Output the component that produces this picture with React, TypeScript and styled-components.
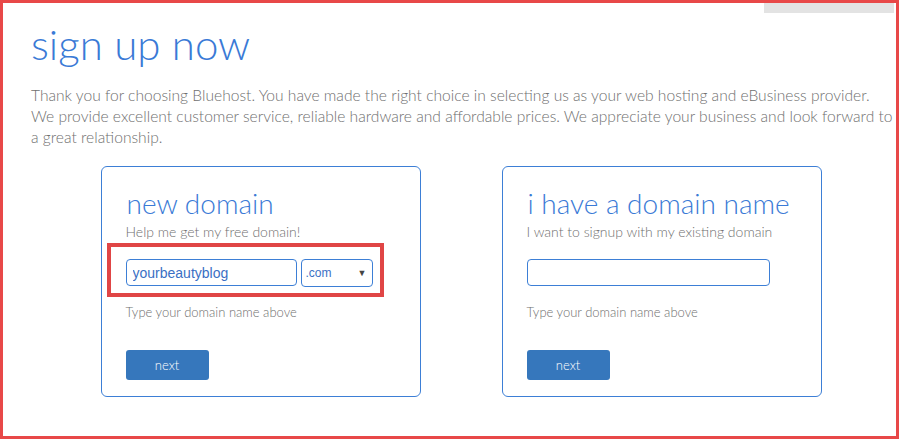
import React from 'react';
import styled, { createGlobalStyle } from 'styled-components';

const GlobalStyle = createGlobalStyle`
  html, body {
    margin: 0;
    padding: 0;
    background: #ffffff;
  }
  body {
    font-family: Lato, 'Open Sans', sans-serif;
  }
`;

const Frame = styled.div`
  box-sizing: border-box;
  width: 899px;
  height: 439px;
  border: 3px solid #e84848;
  overflow: hidden;
`;

const TopStrip = styled.div`
  display: flex;
  justify-content: flex-end;
  padding-right: 2px;
`;

const GrayTab = styled.div`
  width: 130px;
  height: 10px;
  background: #e3e3e3;
`;

const Content = styled.div`
  padding: 0 1px 0 28px;
`;

const PageTitle = styled.h1`
  margin: 7px 0 0;
  font-family: Lato, sans-serif;
  font-weight: 300;
  font-size: 42px;
  line-height: 48px;
  color: #3a7ad6;
`;

const Intro = styled.p`
  margin: 17px 0 0;
  font-family: Lato, sans-serif;
  font-weight: 300;
  font-size: 15.6px;
  line-height: 21px;
  color: #6f6f6f;
`;

const Cards = styled.div`
  display: flex;
  justify-content: center;
  gap: 81px;
  margin-top: 18px;
  padding-right: 4px;
`;

const Card = styled.div`
  box-sizing: border-box;
  width: 320px;
  height: 231px;
  border: 1px solid #3d7fd6;
  border-radius: 6px;
  padding: 19px 24px 0;
  display: flex;
  flex-direction: column;
`;

const CardTitle = styled.h2`
  margin: 0 0 0 1px;
  font-family: Lato, sans-serif;
  font-weight: 300;
  font-size: 28px;
  line-height: 34px;
  color: #3a7ad6;
  white-space: nowrap;
`;

const CardSub = styled.div`
  margin-top: 3px;
  font-family: Lato, sans-serif;
  font-weight: 300;
  font-size: 14px;
  line-height: 18px;
  color: #6f6f6f;
`;

const FieldRow = styled.div`
  position: relative;
  display: flex;
  gap: 4px;
  margin-top: 18px;
  height: 28px;
`;

const Marker = styled.div`
  position: absolute;
  top: -16px;
  left: -19px;
  width: 277px;
  height: 54px;
  box-sizing: border-box;
  border: 4px solid #e04545;
  pointer-events: none;
`;

const TextInput = styled.input<{ $width: number }>`
  box-sizing: border-box;
  width: ${p => p.$width}px;
  height: 27px;
  border: 1px solid #3d7fd6;
  border-radius: 4px;
  padding: 0 6px;
  font-family: 'Liberation Sans', Arial, sans-serif;
  font-size: 14px;
  color: #3a6fc4;
  outline: none;
`;

const SelectBox = styled.div`
  box-sizing: border-box;
  width: 72px;
  height: 28px;
  border: 1px solid #3d7fd6;
  border-radius: 4px;
  padding: 0 5px 0 4px;
  display: flex;
  align-items: center;
  justify-content: space-between;
  font-family: 'Liberation Sans', Arial, sans-serif;
  font-size: 12px;
  color: #3a6fc4;
`;

const Caret = styled.span`
  font-size: 9px;
  color: #444;
`;

const Hint = styled.div`
  margin-top: 17px;
  font-family: Lato, sans-serif;
  font-weight: 300;
  font-size: 13px;
  line-height: 16px;
  color: #6f6f6f;
`;

const NextButton = styled.button`
  align-self: flex-start;
  margin-top: 30px;
  width: 83px;
  height: 30px;
  border: 0;
  border-radius: 3px;
  background: #3677bc;
  color: #ffffff;
  font-family: Lato, sans-serif;
  font-weight: 300;
  font-size: 13px;
  cursor: pointer;
`;

export default function App() {
  return (
    <>
      <GlobalStyle />
      <Frame>
        <TopStrip>
          <GrayTab />
        </TopStrip>
        <Content>
          <PageTitle>sign up now</PageTitle>
          <Intro>
            Thank you for choosing Bluehost. You have made the right choice in selecting us as your web hosting and
            eBusiness provider.
            <br />
            We provide excellent customer service, reliable hardware and affordable prices. We appreciate your business
            and look forward to a great relationship.
          </Intro>
          <Cards>
            <Card>
              <CardTitle>new domain</CardTitle>
              <CardSub>Help me get my free domain!</CardSub>
              <FieldRow>
                <TextInput $width={171} defaultValue="yourbeautyblog" />
                <SelectBox>
                  <span>.com</span>
                  <Caret>▼</Caret>
                </SelectBox>
                <Marker />
              </FieldRow>
              <Hint>Type your domain name above</Hint>
              <NextButton>next</NextButton>
            </Card>
            <Card>
              <CardTitle>i have a domain name</CardTitle>
              <CardSub>I want to signup with my existing domain</CardSub>
              <FieldRow>
                <TextInput $width={243} />
              </FieldRow>
              <Hint>Type your domain name above</Hint>
              <NextButton>next</NextButton>
            </Card>
          </Cards>
        </Content>
      </Frame>
    </>
  );
}
